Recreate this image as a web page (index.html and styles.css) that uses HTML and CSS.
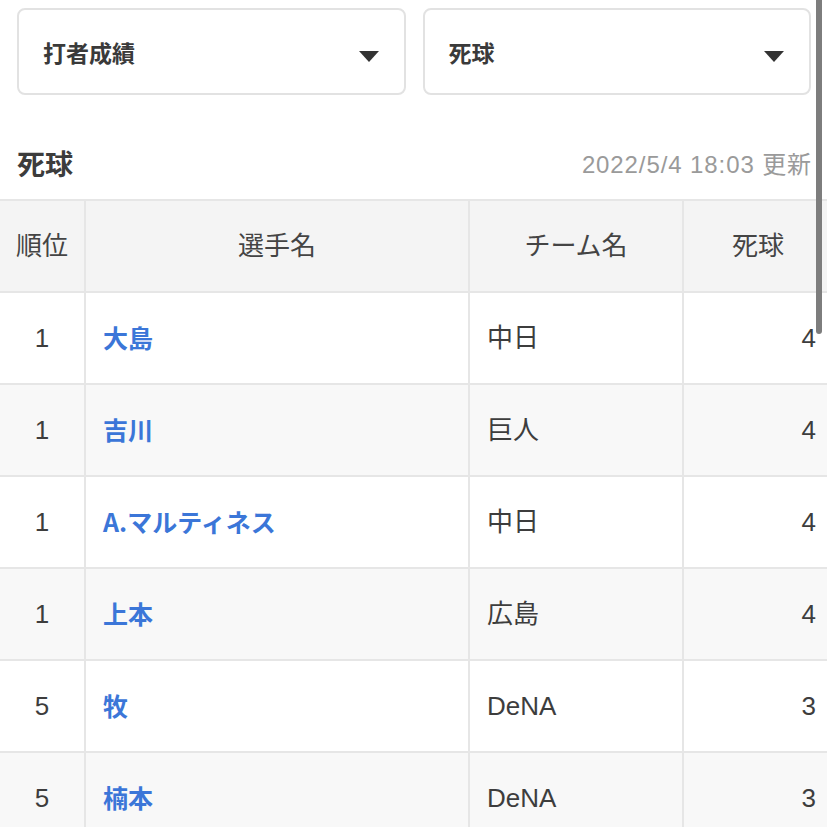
FILE: index.html
```html
<!DOCTYPE html>
<html lang="ja">
<head>
<meta charset="utf-8">
<title>死球</title>
<link rel="stylesheet" href="styles.css">
</head>
<body>
<div class="page">
  <div class="selects">
    <div class="select"><span class="select-label">打者成績</span><span class="caret"></span></div>
    <div class="select"><span class="select-label">死球</span><span class="caret"></span></div>
  </div>
  <div class="heading">
    <h1 class="title">死球</h1>
    <span class="updated">2022/5/4 18:03 更新</span>
  </div>
  <div class="table-wrap">
    <table class="stats">
      <colgroup>
        <col class="c-rank"><col class="c-name"><col class="c-team"><col class="c-val">
      </colgroup>
      <thead>
        <tr><th class="rank">順位</th><th>選手名</th><th>チーム名</th><th>死球</th></tr>
      </thead>
      <tbody>
        <tr><td class="rank">1</td><td class="name"><a href="#">大島</a></td><td class="team">中日</td><td class="val">4</td></tr>
        <tr><td class="rank">1</td><td class="name"><a href="#">吉川</a></td><td class="team">巨人</td><td class="val">4</td></tr>
        <tr><td class="rank">1</td><td class="name"><a href="#">A.マルティネス</a></td><td class="team">中日</td><td class="val">4</td></tr>
        <tr><td class="rank">1</td><td class="name"><a href="#">上本</a></td><td class="team">広島</td><td class="val">4</td></tr>
        <tr><td class="rank">5</td><td class="name"><a href="#">牧</a></td><td class="team">DeNA</td><td class="val">3</td></tr>
        <tr><td class="rank">5</td><td class="name"><a href="#">楠本</a></td><td class="team">DeNA</td><td class="val">3</td></tr>
      </tbody>
    </table>
  </div>
</div>
<div class="scroll-thumb"></div>
</body>
</html>
```
FILE: styles.css
```css
* { box-sizing: border-box; }
html, body {
  margin: 0;
  padding: 0;
  background: #fff;
  overflow: hidden;
}
body {
  font-family: "Liberation Sans", "Noto Sans CJK JP", sans-serif;
  color: #3d3d3d;
  width: 827px;
  height: 827px;
}
.page {
  width: 827px;
}
.selects {
  display: flex;
  gap: 17px;
  padding: 8px 16px 0 17px;
}
.select {
  flex: 1;
  height: 87px;
  border: 2px solid #e2e2e2;
  border-radius: 8px;
  display: flex;
  align-items: center;
  justify-content: space-between;
  padding: 0 25px 0 24px;
}
.select-label {
  font-family: "Noto Sans CJK JP", sans-serif;
  font-weight: 700;
  font-size: 23px;
  line-height: 30px;
  color: #3a3a3a;
}
.caret {
  width: 0;
  height: 0;
  border-left: 10px solid transparent;
  border-right: 10px solid transparent;
  border-top: 11px solid #333;
  margin-top: 10px;
}
.heading {
  display: flex;
  justify-content: space-between;
  align-items: center;
  padding: 0 16px 0 17px;
  margin-top: 48px;
  height: 40px;
  margin-bottom: 16px;
}
.title {
  margin: 0;
  font-family: "Noto Sans CJK JP", sans-serif;
  font-size: 28px;
  font-weight: 700;
  line-height: 40px;
  color: #3c3c3c;
}
.updated {
  font-size: 24px;
  letter-spacing: 0.9px;
  line-height: 30px;
  color: #9a9a9a;
  margin-top: 4px;
  margin-right: -1px;
}
.table-wrap {
  width: 827px;
  overflow: hidden;
}
.stats {
  border-collapse: collapse;
  table-layout: fixed;
  width: 833px;
  font-size: 26px;
}
.c-rank { width: 85px; }
.c-name { width: 384px; }
.c-team { width: 214px; }
.c-val { width: 150px; }
.stats th, .stats td {
  height: 92px;
  border: 2px solid #e6e6e6;
  padding: 0 17px;
  vertical-align: middle;
  line-height: 30px;
}
.stats tr > :first-child { border-left: none; }
.stats th {
  background: #f4f4f4;
  font-weight: 400;
  color: #444;
  text-align: center;
  white-space: nowrap;
}
.stats tbody tr:nth-child(even) td { background: #f8f8f8; }
.stats tbody tr:nth-child(odd) td { background: #fff; }
.stats .rank { text-align: center; padding: 0; }
.name a {
  font-family: "Noto Sans CJK JP", sans-serif;
  font-size: 25px;
  font-weight: 700;
  color: #3b76d8;
  text-decoration: none;
}
.team { text-align: left; }
.stats .val { text-align: right; padding-right: 16px; }
.scroll-thumb {
  position: fixed;
  top: 0;
  right: 5px;
  width: 6px;
  height: 334px;
  background: #7d7d7d;
  border-radius: 0 0 3px 3px;
}
```
